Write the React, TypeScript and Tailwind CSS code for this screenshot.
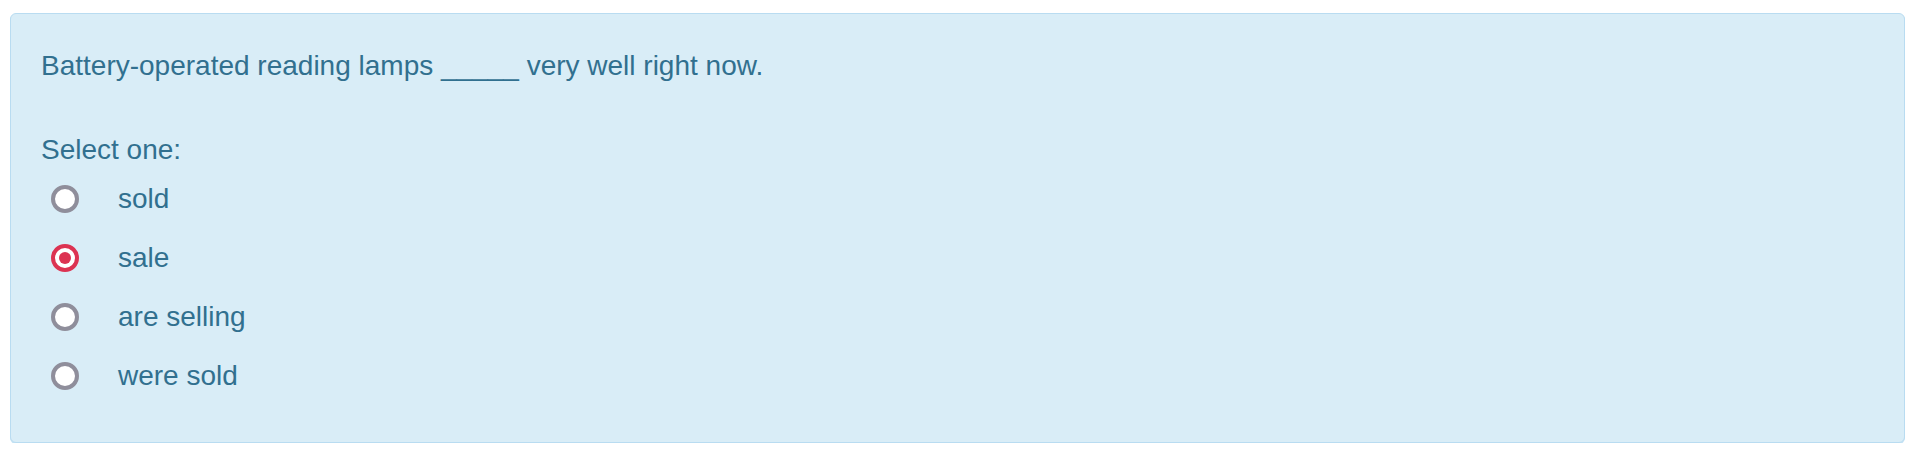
import React, { useState } from "react"

const options = ["sold", "sale", "are selling", "were sold"]

export default function App() {
  const [selected, setSelected] = useState(1)

  return (
    <div className="px-[10px] pt-[13px] font-['Liberation_Sans',Arial,sans-serif]">
      <div className="rounded-[6px] border border-[#b9dcf1] bg-[#d9edf7] px-[30px] pt-[32px] pb-[37px] text-[28px] leading-[39px] text-[#31708f] shadow-[0_1px_0_#c6e3f4]">
        <div>Battery-operated reading lamps _____ very well right now.</div>

        <div className="mt-[45px]">Select one:</div>
        <div className="flex flex-col">
          {options.map((opt, i) => {
            const checked = i === selected
            return (
              <label key={opt} className="flex h-[59px] cursor-pointer items-center" onClick={() => setSelected(i)}>
                <span
                  className={`ml-[10px] flex h-[28px] w-[28px] shrink-0 items-center justify-center rounded-full border-[4px] bg-white ${
                    checked ? "border-[#dc3352]" : "border-[#8f8e9b]"
                  }`}
                >
                  {checked && <span className="h-[12px] w-[12px] rounded-full bg-[#dc3352]" />}
                </span>
                <span className="ml-[39px]">{opt}</span>
              </label>
            )
          })}
        </div>
      </div>
    </div>
  )
}
